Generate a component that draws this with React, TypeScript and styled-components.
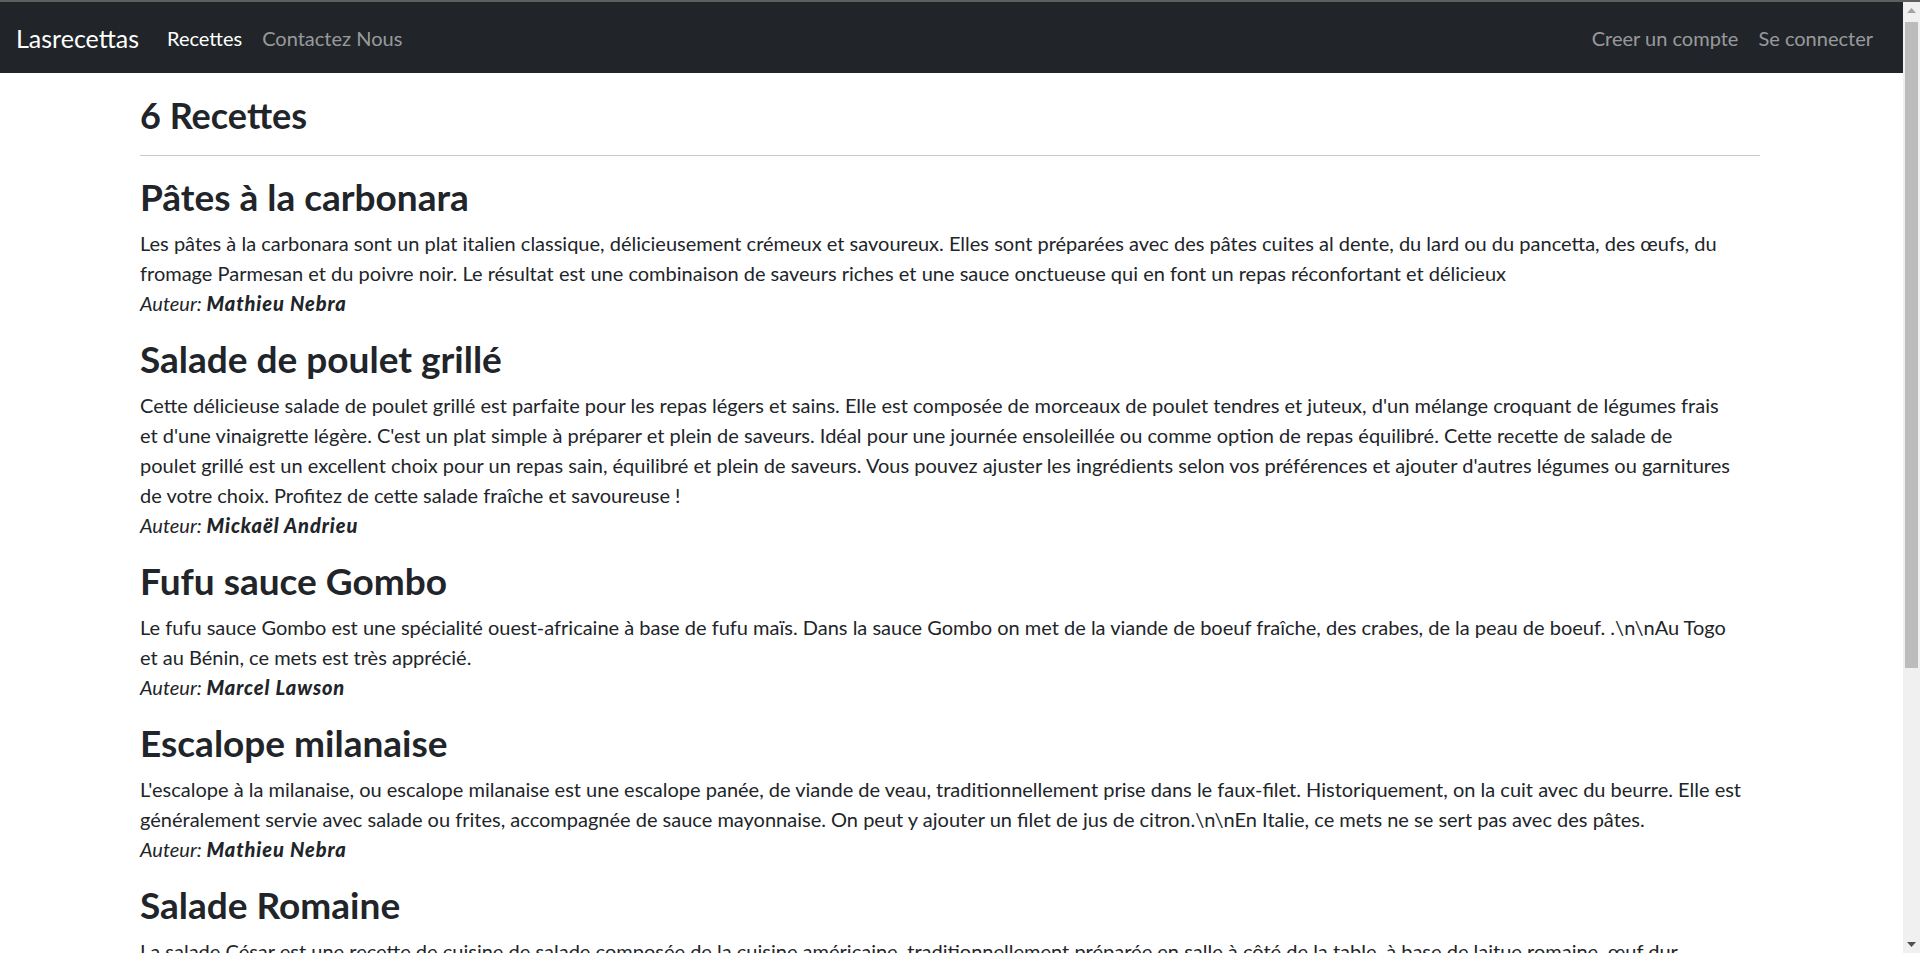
import React from "react";
import styled, { createGlobalStyle } from "styled-components";

const GlobalStyle = createGlobalStyle`
  html, body {
    margin: 0;
    padding: 0;
    background: #fff;
    overflow: hidden;
  }
  body {
    font-family: Lato, "Noto Sans", sans-serif;
    font-size: 20px;
    line-height: 30px;
    color: #212529;
  }
`;

const TopEdge = styled.div`
  height: 2px;
  background: #5f5f5f;
`;

const Shell = styled.div`
  display: flex;
  height: calc(100vh - 2px);
  overflow: hidden;
`;

const Page = styled.div`
  flex: 1;
  min-width: 0;
  overflow: hidden;
`;

const ScrollBar = styled.div`
  width: 17px;
  flex-shrink: 0;
  background: #f0f0f0;
  display: flex;
  flex-direction: column;
`;

const ScrollArrow = styled.div`
  height: 17px;
  display: flex;
  align-items: center;
  justify-content: center;
`;

const ScrollTrack = styled.div`
  flex: 1;
  padding: 3px 2px 0;
`;

const ScrollThumb = styled.div`
  height: 646px;
  background: #bcbcbc;
`;

const NavBar = styled.header`
  background-color: #212529;
  height: 71px;
  display: flex;
  align-items: center;
  padding: 0 20px 0 16px;
`;

const Brand = styled.a`
  color: #fff;
  font-size: 25px;
  line-height: 36px;
  margin-right: 18px;
  text-decoration: none;
`;

const NavGroup = styled.nav<{ $right?: boolean }>`
  display: flex;
  align-items: center;
  margin-left: ${(p) => (p.$right ? "auto" : "0")};
`;

const NavLink = styled.a<{ $active?: boolean }>`
  color: ${(p) => (p.$active ? "#fff" : "rgba(255, 255, 255, 0.55)")};
  font-size: 20px;
  line-height: 30px;
  padding: 0 10px;
  text-decoration: none;
  cursor: pointer;
`;

const Main = styled.main`
  padding: 22px 143px 40px 140px;
`;

const PageTitle = styled.h3`
  font-size: 36px;
  line-height: 41px;
  font-weight: 700;
  margin: 0;
`;

const Rule = styled.hr`
  border: 0;
  border-top: 1px solid #c8c9ca;
  margin: 19px 0 18px;
`;

const Recipe = styled.article`
  margin-bottom: 18px;
`;

const RecipeTitle = styled.h2`
  font-size: 37px;
  line-height: 46px;
  font-weight: 700;
  margin: 0 0 8px;
`;

const Description = styled.div`
  font-size: 20px;
  line-height: 30px;
`;

const Author = styled.div`
  font-style: italic;

  b {
    font-weight: 900;
    letter-spacing: 0.9px;
  }
`;

type RecipeData = {
  title: string;
  text: string;
  author: string;
};

// non-breaking spaces keep the line breaks where the original page has them
const recipes: RecipeData[] = [
  {
    title: "Pâtes à la carbonara",
    text: "Les pâtes à la carbonara sont un plat italien classique, délicieusement crémeux et savoureux. Elles sont préparées avec des pâtes cuites al dente, du lard ou du pancetta, des œufs, du fromage Parmesan et du poivre noir. Le résultat est une combinaison de saveurs riches et une sauce onctueuse qui en font un repas réconfortant et délicieux",
    author: "Mathieu Nebra",
  },
  {
    title: "Salade de poulet grillé",
    text: "Cette délicieuse salade de poulet grillé est parfaite pour les repas légers et sains. Elle est composée de morceaux de poulet tendres et juteux, d'un mélange croquant de légumes frais et\u00a0d'une vinaigrette légère. C'est un plat simple à préparer et plein de saveurs. Idéal pour une journée ensoleillée ou comme option de repas équilibré. Cette recette de salade de poulet\u00a0grillé est un excellent choix pour un repas sain, équilibré et plein de saveurs. Vous pouvez ajuster les ingrédients selon vos préférences et ajouter d'autres légumes ou garnitures de\u00a0votre choix. Profitez de cette salade fraîche et savoureuse !",
    author: "Mickaël Andrieu",
  },
  {
    title: "Fufu sauce Gombo",
    text: "Le fufu sauce Gombo est une spécialité ouest-africaine à base de fufu maïs. Dans la sauce Gombo on met de la viande de boeuf fraîche, des crabes, de la peau de boeuf. .\\n\\nAu Togo et\u00a0au Bénin, ce mets est très apprécié.",
    author: "Marcel Lawson",
  },
  {
    title: "Escalope milanaise",
    text: "L'escalope à la milanaise, ou escalope milanaise est une escalope panée, de viande de veau, traditionnellement prise dans le faux-filet. Historiquement, on la cuit avec du beurre. Elle est généralement servie avec salade ou frites, accompagnée de sauce mayonnaise. On peut y ajouter un filet de jus de citron.\\n\\nEn Italie, ce mets ne se sert pas avec des pâtes.",
    author: "Mathieu Nebra",
  },
  {
    title: "Salade Romaine",
    text: "La salade César est une recette de cuisine de salade composée de la cuisine américaine, traditionnellement préparée en salle à côté de la table, à base de laitue romaine, œuf dur, croûtons, parmesan et de « sauce César » à base de parmesan râpé, huile d'olive, pâte d'anchois, ail, vinaigre de vin, moutarde, jaune d'œuf et sauce Worcestershire.",
    author: "Mickaël Andrieu",
  },
  {
    title: "Poulet Yassa",
    text: "Le poulet yassa est un plat traditionnel sénégalais à base de poulet mariné dans du citron et des oignons, puis mijoté longuement. Il est servi avec du riz blanc.",
    author: "Marcel Lawson",
  },
];

const App: React.FC = () => {
  return (
    <>
      <GlobalStyle />
      <TopEdge />
      <Shell>
        <Page>
          <NavBar>
            <Brand href="#">Lasrecettas</Brand>
            <NavGroup>
              <NavLink $active>Recettes</NavLink>
              <NavLink>Contactez Nous</NavLink>
            </NavGroup>
            <NavGroup $right>
              <NavLink>Creer un compte</NavLink>
              <NavLink>Se connecter</NavLink>
            </NavGroup>
          </NavBar>
          <Main>
            <PageTitle>{recipes.length} Recettes</PageTitle>
            <Rule />
            {recipes.map((r) => (
              <Recipe key={r.title}>
                <RecipeTitle>{r.title}</RecipeTitle>
                <Description>{r.text}</Description>
                <Author>
                  Auteur: <b>{r.author}</b>
                </Author>
              </Recipe>
            ))}
          </Main>
        </Page>
        <ScrollBar>
          <ScrollArrow>
            <svg width="9" height="5" viewBox="0 0 9 5">
              <polygon points="0,5 4.5,0 9,5" fill="#a3a3a3" />
            </svg>
          </ScrollArrow>
          <ScrollTrack>
            <ScrollThumb />
          </ScrollTrack>
          <ScrollArrow>
            <svg width="9" height="5" viewBox="0 0 9 5">
              <polygon points="0,0 4.5,5 9,0" fill="#505050" />
            </svg>
          </ScrollArrow>
        </ScrollBar>
      </Shell>
    </>
  );
};

export default App;
